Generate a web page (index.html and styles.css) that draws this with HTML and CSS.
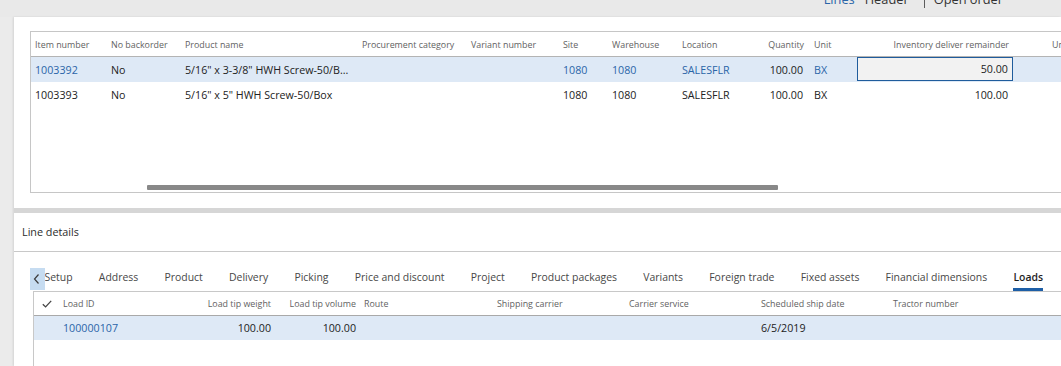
FILE: index.html
```html
<!DOCTYPE html>
<html lang="en">
<head>
<meta charset="utf-8">
<title>Sales order lines</title>
<link rel="stylesheet" href="styles.css">
</head>
<body>
<div class="top">
  <nav class="crumbs">
    <span class="link">Lines</span>
    <span class="cur">Header</span>
    <span class="vsep"></span>
    <span class="cur open">Open order</span>
  </nav>
</div>
<div class="main">
  <section class="panel p1">
    <div class="grid1">
      <div class="cols1 head">
        <div class="c">Item number</div>
        <div class="c">No backorder</div>
        <div class="c">Product name</div>
        <div class="c">Procurement category</div>
        <div class="c">Variant number</div>
        <div class="c">Site</div>
        <div class="c">Warehouse</div>
        <div class="c">Location</div>
        <div class="c r">Quantity</div>
        <div class="c u">Unit</div>
        <div class="c r">Inventory deliver remainder</div>
        <div class="c"></div>
        <div class="c">Unit price</div>
      </div>
      <div class="cols1 row sel">
        <div class="c link">1003392</div>
        <div class="c">No</div>
        <div class="c">5/16" x 3-3/8" HWH Screw-50/B...</div>
        <div class="c"></div>
        <div class="c"></div>
        <div class="c link">1080</div>
        <div class="c link">1080</div>
        <div class="c link">SALESFLR</div>
        <div class="c r">100.00</div>
        <div class="c u link">BX</div>
        <div class="c inpc"><div class="inp">50.00</div></div>
        <div class="c"></div>
        <div class="c"></div>
      </div>
      <div class="cols1 row">
        <div class="c">1003393</div>
        <div class="c">No</div>
        <div class="c">5/16" x 5" HWH Screw-50/Box</div>
        <div class="c"></div>
        <div class="c"></div>
        <div class="c">1080</div>
        <div class="c">1080</div>
        <div class="c">SALESFLR</div>
        <div class="c r">100.00</div>
        <div class="c u">BX</div>
        <div class="c r">100.00</div>
        <div class="c"></div>
        <div class="c"></div>
      </div>
      <div class="fill"></div>
      <div class="hscroll"></div>
    </div>
  </section>
  <section class="panel p2">
    <div class="ptitle">Line details</div>
    <div class="pbody">
      <div class="tabs">
        <button class="back" type="button" aria-label="Previous tabs">
          <svg width="15" height="22" viewBox="0 0 15 22"><path d="M8.5 6.5 L4.5 11 L8.5 15.5" fill="none" stroke="#3b3b3b" stroke-width="1.2"/></svg>
        </button>
        <span class="tab">Setup</span>
        <span class="tab">Address</span>
        <span class="tab">Product</span>
        <span class="tab">Delivery</span>
        <span class="tab">Picking</span>
        <span class="tab">Price and discount</span>
        <span class="tab">Project</span>
        <span class="tab">Product packages</span>
        <span class="tab">Variants</span>
        <span class="tab">Foreign trade</span>
        <span class="tab">Fixed assets</span>
        <span class="tab">Financial dimensions</span>
        <span class="tab active">Loads</span>
      </div>
      <div class="grid2">
        <div class="cols2 head2">
          <div class="c chk"><svg width="10" height="8" viewBox="0 0 10 8"><path d="M0.8 4.2 L3.6 6.9 L9.2 0.9" fill="none" stroke="#444" stroke-width="1.3"/></svg></div>
          <div class="c">Load ID</div>
          <div class="c r">Load tip weight</div>
          <div class="c r">Load tip volume</div>
          <div class="c">Route</div>
          <div class="c">Shipping carrier</div>
          <div class="c">Carrier service</div>
          <div class="c">Scheduled ship date</div>
          <div class="c">Tractor number</div>
        </div>
        <div class="cols2 row2 sel">
          <div class="c"></div>
          <div class="c link">100000107</div>
          <div class="c r">100.00</div>
          <div class="c r">100.00</div>
          <div class="c"></div>
          <div class="c"></div>
          <div class="c"></div>
          <div class="c">6/5/2019</div>
          <div class="c"></div>
        </div>
      </div>
    </div>
  </section>
</div>
</body>
</html>
```

FILE: styles.css
```css
html, body {
  margin: 0;
  padding: 0;
  height: 366px;
  overflow: hidden;
}
body {
  width: 1061px;
  background: #ebebeb;
  font-family: "Open Sans", "Noto Sans", "DejaVu Sans", sans-serif;
  color: #222;
}
.top {
  height: 17px;
  overflow: hidden;
  background: #e9e9e9;
  display: flex;
  justify-content: flex-end;
  padding-right: 58px;
}
.crumbs {
  display: flex;
  align-items: flex-start;
  font-size: 12.8px;
  line-height: 17px;
  margin-top: -9px;
}
.crumbs .link { color: #2a65a8; margin-right: 10px; }
.crumbs .cur { color: #333; }
.vsep {
  width: 1px;
  height: 17px;
  background: #5c5c5c;
  margin: 0 9px 0 15px;
}
.main {
  margin-left: 14px;
  background: #d6d6d6;
  box-shadow: -1px 0 2px rgba(0, 0, 0, 0.10);
}
.panel { background: #fff; }
.p1 {
  padding: 14px 0 15px 16px;
  margin-bottom: 5px;
}
.grid1 {
  height: 160px;
  border: 1px solid #c6c6c6;
  border-right: 0;
  display: flex;
  flex-direction: column;
}
.cols1 {
  display: grid;
  grid-template-columns: 76px 74px 177px 109px 92px 49px 70px 70px 60px 49px 156px 35px 13px;
}
.c {
  padding: 0 4px;
  white-space: nowrap;
  overflow: hidden;
  display: flex;
  align-items: center;
  min-width: 0;
}
.c.r { justify-content: flex-end; }
.c.u { padding-left: 6px; }
.head {
  height: 24px;
  border-bottom: 1px solid #b4b4b4;
  font-size: 8.9px;
  color: #626262;
}
.row {
  height: 25px;
  font-size: 10.7px;
  color: #222;
}
.sel { background: #dee9f6; }
.link { color: #2a65a8; }
.row .c.r { padding-right: 5px; }
.c.inpc { padding: 0; align-items: flex-start; }
.inp {
  box-sizing: border-box;
  width: 100%;
  height: 24px;
  border: 1px solid #1f5c9c;
  background: #f2f2f2;
  display: flex;
  align-items: center;
  justify-content: flex-end;
  padding-right: 4px;
  color: #222;
}
.fill { flex: 1; }
.hscroll {
  width: 631px;
  height: 5px;
  margin: 0 0 2px 116px;
  background: #888;
  border-radius: 1px;
}
.p2 { height: 153px; }
.ptitle {
  height: 38px;
  line-height: 37px;
  padding-left: 8px;
  border-bottom: 1px solid #c8c8c8;
  font-size: 10.8px;
  color: #2b2b2b;
}
.pbody { padding: 16px 0 0 19px; }
.tabs {
  position: relative;
  display: flex;
  height: 23px;
  border-bottom: 1px solid #c8c8c8;
  padding-left: 11.5px;
  gap: 26.2px;
  font-size: 10.45px;
  line-height: 18px;
  color: #474747;
  white-space: nowrap;
}
.tab { position: relative; }
.tab.active { color: #1e1e1e; font-weight: 600; }
.tab.active::after {
  content: "";
  position: absolute;
  left: 0;
  right: 0;
  bottom: 0;
  height: 3px;
  background: #1d5ea6;
}
.back {
  position: absolute;
  z-index: 2;
  left: -3px;
  top: 0;
  width: 15px;
  height: 22px;
  padding: 0;
  border: 0;
  background: #c6dcf1;
  display: block;
}
.back svg { display: block; }
.grid2 {
  border-left: 1px solid #c8c8c8;
  height: 80px;
}
.cols2 {
  display: grid;
  grid-template-columns: 25px 131px 85px 85px 133px 132px 132px 132px 1fr;
}
.head2 {
  height: 23px;
  border-bottom: 1px solid #a9a9a9;
  font-size: 8.9px;
  color: #626262;
}
.c.chk { justify-content: center; padding: 0; }
.c.chk svg { display: block; }
.row2 {
  height: 24px;
  font-size: 10.7px;
}
.row2 .c.r { padding-right: 4px; }
```
